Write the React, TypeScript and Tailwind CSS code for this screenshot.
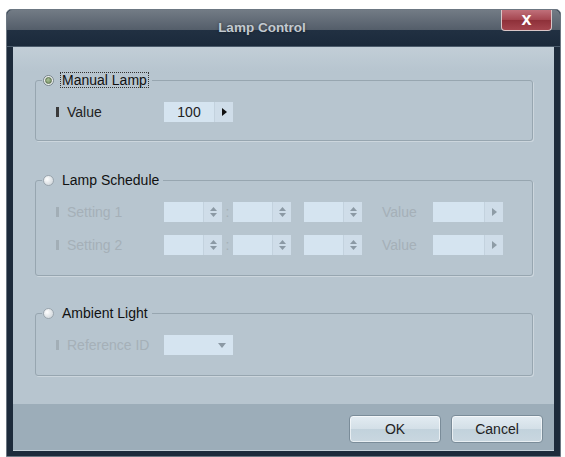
import React from 'react';

const FONT = { fontFamily: '"Liberation Sans", Arial, sans-serif' };

const Radio = ({ checked = false }: { checked?: boolean }) =>
  checked ? (
    <span className="flex items-center justify-center w-[11px] h-[11px] rounded-full border border-[#76838b] bg-[#eef2ef]">
      <span className="w-[7px] h-[7px] rounded-full border border-[#5d7150] bg-[radial-gradient(circle_at_40%_35%,#a9c196,#6f8a5e)]" />
    </span>
  ) : (
    <span className="w-[11px] h-[11px] rounded-full border border-[#9ba6ae] bg-[radial-gradient(circle_at_35%_35%,#ffffff,#c6ced4)]" />
  );

const Label = ({ text, disabled = false }: { text: string; disabled?: boolean }) => (
  <div className="w-[108px] flex items-center">
    <span className={disabled ? 'w-[3px] h-[10px] bg-[#a2aeb6]' : 'w-[3px] h-[10px] bg-[#3a3a3a]'} />
    <span className={disabled ? 'ml-[8px] text-[14px] text-[#a5b0b8]' : 'ml-[8px] text-[14px] text-[#222]'}>
      {text}
    </span>
  </div>
);

const ArrowRight = ({ disabled = false }: { disabled?: boolean }) => (
  <svg width="5" height="8" viewBox="0 0 5 8">
    <path d="M0 0 L5 4 L0 8 Z" fill={disabled ? '#8e9ca6' : '#111'} />
  </svg>
);

const ValueField = ({ value = '', disabled = false, width = 'w-[69px]' }: { value?: string; disabled?: boolean; width?: string }) => (
  <div className={`${width} h-[20px] flex bg-[#d5e4f0]`}>
    <div className="flex-1 flex items-center justify-center text-[14px] text-[#222]">{value}</div>
    <div className="w-[19px] flex items-center justify-center bg-[#cfdde9] border-l border-[#c3d2de]">
      <ArrowRight disabled={disabled} />
    </div>
  </div>
);

const Spin = () => (
  <div className="w-[58px] h-[20px] flex bg-[#d5e4f0]">
    <div className="flex-1" />
    <div className="w-[19px] flex items-center justify-center bg-[#cfdde9] border-l border-[#c3d2de]">
      <svg width="9" height="12" viewBox="0 0 9 12">
        <path d="M4.5 1 L8 5 L1 5 Z" fill="#8b99a4" />
        <path d="M1 7 L8 7 L4.5 11 Z" fill="#8b99a4" />
      </svg>
    </div>
  </div>
);

const Dropdown = () => (
  <div className="w-[69px] h-[20px] flex items-center justify-end pr-[7px] bg-[#d5e4f0]">
    <svg width="8" height="5" viewBox="0 0 8 5">
      <path d="M0 0 L8 0 L4 5 Z" fill="#8b99a4" />
    </svg>
  </div>
);

const Group = ({
  title,
  checked = false,
  focus = false,
  className = '',
  children,
}: {
  title: string;
  checked?: boolean;
  focus?: boolean;
  className?: string;
  children: React.ReactNode;
}) => (
  <fieldset className={`border border-[#97a6b0] rounded-[3px] shadow-[1px_1px_0_rgba(255,255,255,0.3)] ${className}`}>
    <legend className="ml-[6px] px-[1px]">
      <span className="flex items-center h-[16px]">
        <Radio checked={checked} />
        <span
          className={
            focus
              ? 'ml-[6px] px-[1px] border border-dotted border-[#333] leading-[14px] text-[14px] text-[#111]'
              : 'ml-[7px] px-[1px] leading-[14px] text-[14px] text-[#111]'
          }
        >
          {title}
        </span>
        <span className="w-[2px]" />
      </span>
    </legend>
    {children}
  </fieldset>
);

const Button = ({ children }: { children: React.ReactNode }) => (
  <button className="w-[92px] h-[28px] rounded-[4px] border border-[#7a8c99] bg-[linear-gradient(to_bottom,#e3ecf2_0%,#d3dfe7_50%,#c2d2dc_51%,#c9d7e0_100%)] shadow-[inset_0_0_0_1px_rgba(255,255,255,0.6)] text-[14px] text-[#222]">
    {children}
  </button>
);

export default function App() {
  return (
    <div className="w-[565px] h-[457px] bg-white pt-[9px] pl-[6px]" style={FONT}>
      <div className="w-[555px] h-[448px] flex flex-col rounded-t-[5px] border border-[#6c7782] bg-[#1d2b3b]">
        <div className="relative h-[37px] flex justify-center pr-[43px] pt-[9px] rounded-t-[5px] bg-[linear-gradient(to_bottom,#727b85_0%,#545e6a_55%,#213042_56%,#1b2a3b_100%)] border-b border-[#4c5c6c]">
          <span className="text-[13.5px] font-bold leading-[18px] text-[#c3cad1] [text-shadow:0_0_3px_rgba(0,0,0,0.5)]">
            Lamp Control
          </span>
          <div className="absolute right-[8px] top-0 w-[51px] h-[21px] flex items-center justify-center rounded-b-[4px] border border-[#d9c6c8] border-t-0 bg-[linear-gradient(to_bottom,#c0707a_0%,#a4454f_50%,#8e3039_51%,#a4454e_100%)]">
            <span className="text-[18px] font-bold leading-[16px] text-white -mt-[3px]">x</span>
          </div>
        </div>
        <div className="flex-1 mx-[6px] mb-[5px] flex flex-col">
          <div className="flex-1 bg-[linear-gradient(to_bottom,#c2ced7_0px,#b7c5cf_24px,#b7c5cf_100%)] pl-[22px] pr-[21px] pt-[25px]">
            <Group title="Manual Lamp" checked focus>
              <div className="pl-[20px] pt-[14px] pb-[18px]">
                <div className="flex items-center h-[20px]">
                  <Label text="Value" />
                  <ValueField value="100" />
                </div>
              </div>
            </Group>
            <Group title="Lamp Schedule" className="mt-[31px]">
              <div className="pl-[20px] pt-[14px] pb-[20px] flex flex-col gap-[13px]">
                {['Setting 1', 'Setting 2'].map((s) => (
                  <div key={s} className="flex items-center h-[20px]">
                    <Label text={s} disabled />
                    <Spin />
                    <span className="w-[11px] text-center text-[14px] text-[#a5b0b8]">:</span>
                    <Spin />
                    <span className="w-[13px]" />
                    <Spin />
                    <span className="ml-[20px] w-[51px] text-[14px] text-[#a5b0b8]">Value</span>
                    <ValueField disabled width="w-[70px]" />
                  </div>
                ))}
              </div>
            </Group>
            <Group title="Ambient Light" className="mt-[29px]">
              <div className="pl-[20px] pt-[14px] pb-[20px]">
                <div className="flex items-center h-[20px]">
                  <Label text="Reference ID" disabled />
                  <Dropdown />
                </div>
              </div>
            </Group>
          </div>
          <div className="h-[47px] bg-[#9cadb9] border-b border-[#c5d1d9] flex justify-end items-start gap-[10px] pr-[11px] pt-[11px]">
            <Button>OK</Button>
            <Button>Cancel</Button>
          </div>
        </div>
      </div>
    </div>
  );
}
